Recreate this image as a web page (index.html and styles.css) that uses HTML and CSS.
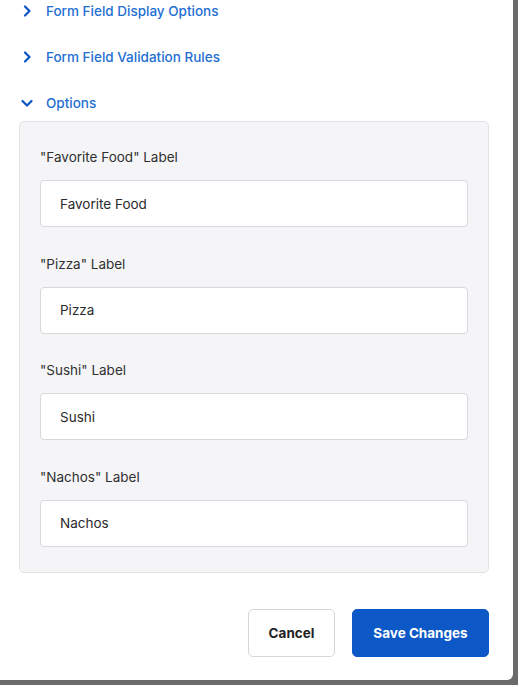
FILE: index.html
```html
<!DOCTYPE html>
<html>
<head>
<meta charset="utf-8">
<link rel="stylesheet" href="styles.css">
</head>
<body>
<div class="modal">
  <div class="section">
    <svg class="chev" viewBox="0 0 12 12" width="12" height="12"><path d="M4 1.5 L8.5 6 L4 10.5" /></svg>
    <span>Form Field Display Options</span>
  </div>
  <div class="section">
    <svg class="chev" viewBox="0 0 12 12" width="12" height="12"><path d="M4 1.5 L8.5 6 L4 10.5" /></svg>
    <span>Form Field Validation Rules</span>
  </div>
  <div class="section open">
    <svg class="chev" viewBox="0 0 12 12" width="12" height="12"><path d="M1.5 4 L6 8.5 L10.5 4" /></svg>
    <span>Options</span>
  </div>
  <div class="panel">
    <div class="field">
      <label class="label">"Favorite Food" Label</label>
      <div class="input">Favorite Food</div>
    </div>
    <div class="field">
      <label class="label">"Pizza" Label</label>
      <div class="input">Pizza</div>
    </div>
    <div class="field">
      <label class="label">"Sushi" Label</label>
      <div class="input">Sushi</div>
    </div>
    <div class="field">
      <label class="label">"Nachos" Label</label>
      <div class="input">Nachos</div>
    </div>
  </div>
  <div class="actions">
    <button class="btn cancel">Cancel</button>
    <button class="btn save">Save Changes</button>
  </div>
</div>
</body>
</html>
```
FILE: styles.css
```css
html, body {
  margin: 0;
  padding: 0;
  background: #6a6a6a;
  font-family: Inter, "Liberation Sans", Arial, sans-serif;
}
.modal {
  width: 513px;
  height: 680px;
  background: #ffffff;
  border-bottom-right-radius: 6px;
  box-sizing: border-box;
  padding: 2px 24px 0 19px;
  overflow: hidden;
}
.section {
  display: flex;
  align-items: center;
  height: 18px;
  margin-bottom: 28px;
  color: #1f6fd2;
  font-size: 13.5px;
  font-weight: 500;
}
.section.open {
  margin-bottom: 9px;
}
.chev {
  width: 12px;
  height: 12px;
  margin-left: 2px;
  margin-right: 13px;
  fill: none;
  stroke: #0b55c2;
  stroke-width: 2.2;
  stroke-linecap: round;
  stroke-linejoin: round;
}
.panel {
  background: #f5f5f7;
  border: 1px solid #e3e3e6;
  border-radius: 5px;
  padding: 26px 20px 25.5px 20px;
  display: flex;
  flex-direction: column;
  gap: 27.67px;
}
.field {
  display: flex;
  flex-direction: column;
}
.label {
  font-size: 13.5px;
  line-height: 18px;
  color: #303032;
  margin-bottom: 14px;
}
.input {
  height: 45px;
  box-sizing: content-box;
  background: #ffffff;
  border: 1px solid #d8d8dc;
  border-radius: 4px;
  padding: 0 19px;
  display: flex;
  align-items: center;
  font-size: 13.5px;
  color: #2a2a2c;
}
.actions {
  display: flex;
  justify-content: flex-end;
  gap: 17px;
  margin-top: 35.5px;
}
.btn {
  height: 48px;
  border-radius: 5px;
  font-family: Inter, "Liberation Sans", Arial, sans-serif;
  font-size: 13.5px;
  font-weight: 700;
  cursor: pointer;
}
.cancel {
  width: 87px;
  background: #ffffff;
  border: 1px solid #d6d6da;
  color: #222224;
}
.save {
  width: 137px;
  background: #0b58c6;
  border: 1px solid #0b58c6;
  color: #ffffff;
}
```
